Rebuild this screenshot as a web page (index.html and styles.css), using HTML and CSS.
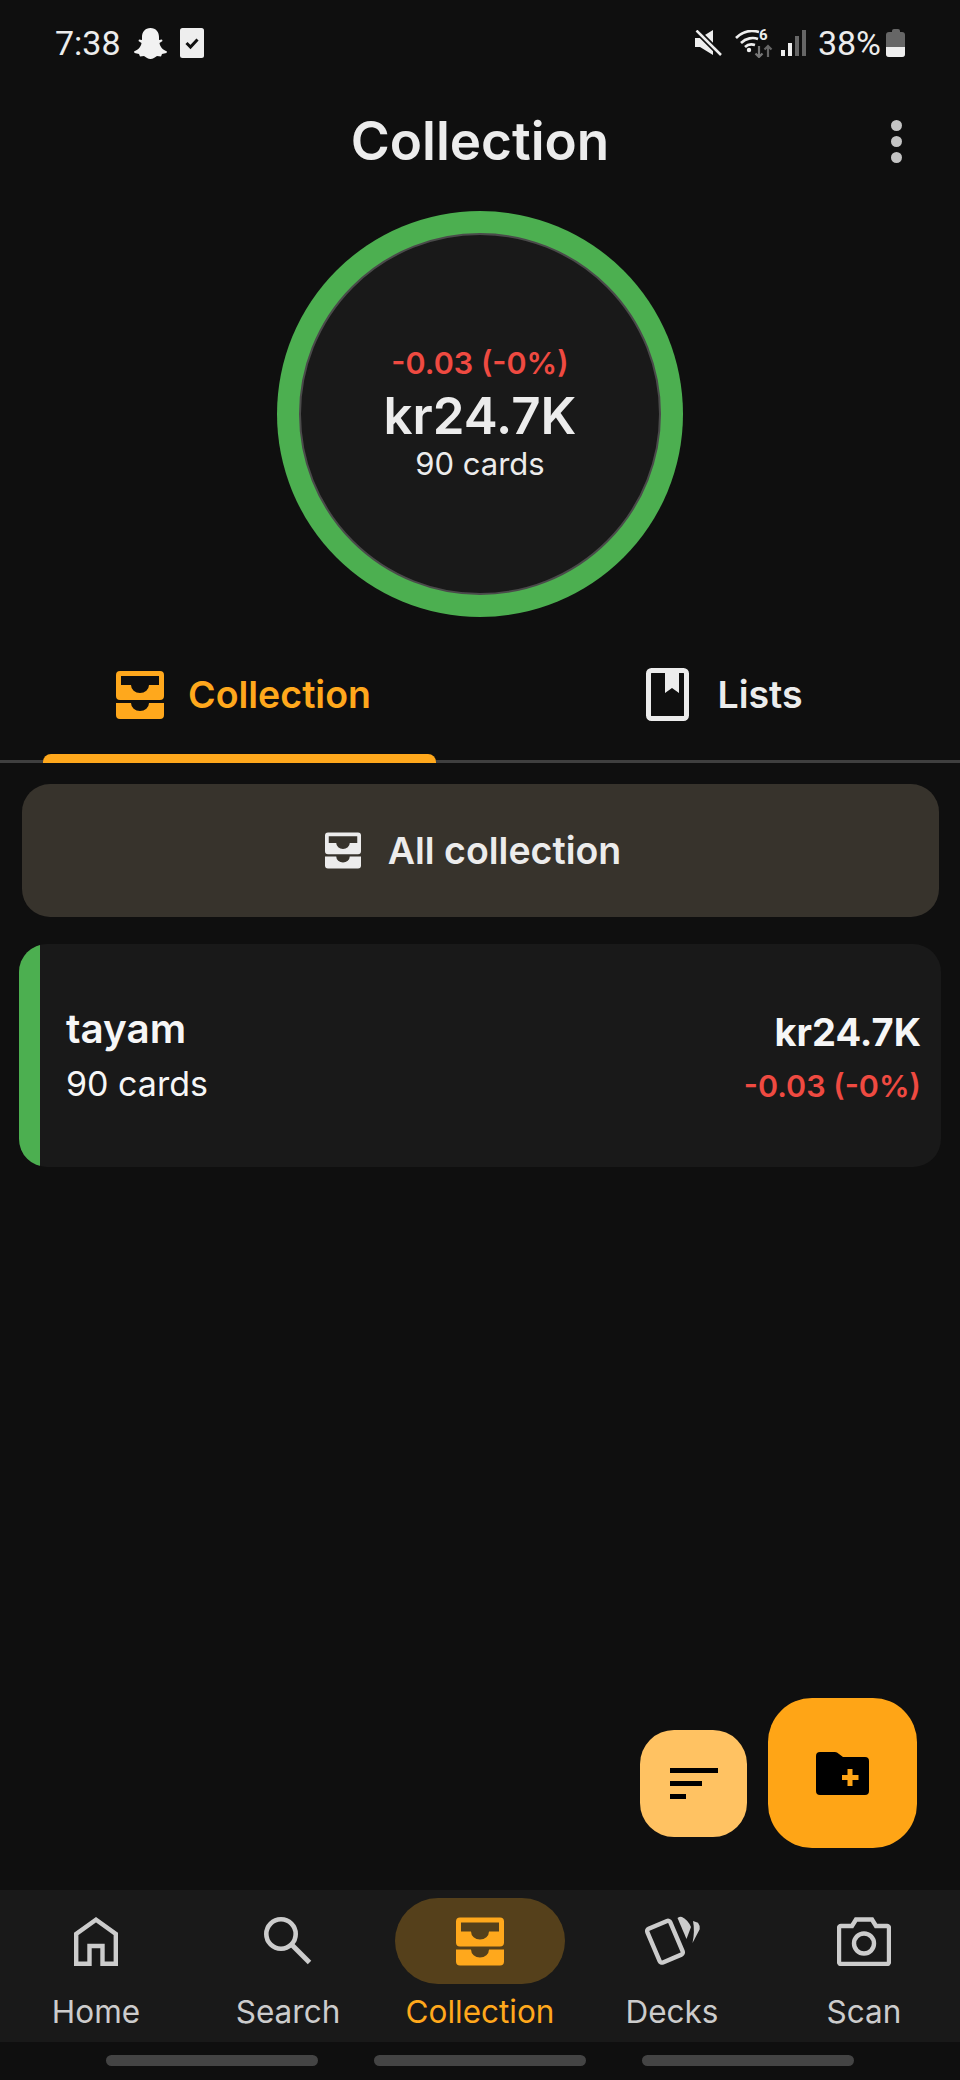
FILE: index.html
```html
<!DOCTYPE html>
<html lang="en">
<head>
    <meta charset="UTF-8">
    <meta name="viewport" content="width=device-width, initial-scale=1.0">
    <title>Collection</title>
    <link rel="stylesheet" href="styles.css">
</head>
<body>

    <!-- Shared icons -->
    <svg class="icon-defs" width="0" height="0" aria-hidden="true">
        <symbol id="icon-trays" viewBox="0 0 48 48">
            <path fill-rule="evenodd" d="M4 0H44a4 4 0 0 1 4 4V25a4 4 0 0 1-4 4H4a4 4 0 0 1-4-4V4a4 4 0 0 1 4-4ZM5 5V14H15a9 8 0 0 0 18 0H43V5Z"/>
            <path d="M0 32H15a9 8 0 0 0 18 0H48V44a4 4 0 0 1-4 4H4a4 4 0 0 1-4-4Z"/>
        </symbol>
    </svg>

    <!-- Status bar -->
    <div class="status-bar">
        <div class="status-left">
            <span class="status-text">7:38</span>
            <svg class="icon-ghost" width="33" height="31" viewBox="0 0 33 31">
                <path d="M16.5 0C22 0 25 4 25 9V12L28 11.5 28.5 13 25.5 15C26 19 29 22 33 23.5L32.5 25 28 26 27 28.5 23 28C21 29 19 31 16.5 31 14 31 12 29 10 28L6 28.5 5 26 .5 25 0 23.5C4 22 7 19 7.5 15L4.5 13 5 11.5 8 12V9C8 4 11 0 16.5 0Z"/>
            </svg>
            <svg class="icon-check" width="24" height="30" viewBox="0 0 24 30">
                <rect width="24" height="30" rx="2.5" fill="#eeeeee"/>
                <path d="M6.5 15L10.5 19 17.5 11.5" fill="none" stroke="#111111" stroke-width="3"/>
            </svg>
        </div>
        <div class="status-right">
            <svg class="icon-mute" width="27" height="26" viewBox="0 0 27 26">
                <path d="M0 8H5L18 0V25L5 17H0Z" fill="#eeeeee"/>
                <path d="M1 0L26 25" stroke="#0f0f0f" stroke-width="6"/>
                <path d="M1.500 0.500L26 25" stroke="#eeeeee" stroke-width="2.500"/>
            </svg>
            <div class="wifi">
                <svg width="38" height="28" viewBox="0 0 38 28">
                    <path d="M1 8C8 1 17 0 24 2M6 13C11 8 18 7 23 9M10 17C13 14 17 14 20 15" fill="none" stroke="#eeeeee" stroke-width="2.600"/>
                    <circle cx="14" cy="20" r="2.200" fill="#eeeeee"/>
                    <path d="M24 16V27M20.500 23.500L24 27 27.500 23.500" fill="none" stroke="#777777" stroke-width="2.200"/>
                    <path d="M33 27V16M29.500 19.500L33 16 36.500 19.500" fill="none" stroke="#666666" stroke-width="2.200"/>
                </svg>
                <span class="wifi-six">6</span>
            </div>
            <div class="signal">
                <span class="signal-bar bar-one"></span>
                <span class="signal-bar bar-two"></span>
                <span class="signal-bar bar-three off"></span>
                <span class="signal-bar bar-four off"></span>
            </div>
            <span class="status-text">38%</span>
            <div class="battery">
                <span class="battery-cap"></span>
                <span class="battery-body"><span class="battery-level"></span></span>
            </div>
        </div>
    </div>

    <!-- Title -->
    <header class="top-bar">
        <h1>Collection</h1>
        <div class="more-dots"><span></span><span></span><span></span></div>
    </header>

    <!-- Value ring -->
    <section class="ring-area">
        <div class="ring">
            <div class="ring-inner">
                <div class="change ring-change">-0.03 (-0%)</div>
                <div class="ring-value">kr24.7K</div>
                <div class="ring-count">90 cards</div>
            </div>
        </div>
    </section>

    <!-- Tabs -->
    <nav class="tabs">
        <div class="tab active">
            <svg class="tab-icon" width="48" height="48"><use href="#icon-trays"/></svg>
            <span>Collection</span>
        </div>
        <div class="tab tab-lists">
            <svg class="tab-icon" width="43" height="53" viewBox="0 0 43 53">
                <rect x="2.500" y="2.500" width="38" height="48" rx="3" fill="none" stroke="currentColor" stroke-width="5"/>
                <path d="M19 3H33V25L26 20 19 25Z"/>
            </svg>
            <span>Lists</span>
        </div>
    </nav>

    <main class="content">
        <div class="all-button">
            <svg width="36" height="37"><use href="#icon-trays"/></svg>
            <span>All collection</span>
        </div>

        <div class="list-card">
            <span class="card-stripe"></span>
            <div class="card-body">
                <div class="card-left">
                    <div class="card-name">tayam</div>
                    <div class="card-count">90 cards</div>
                </div>
                <div class="card-right">
                    <div class="card-value">kr24.7K</div>
                    <div class="change">-0.03 (-0%)</div>
                </div>
            </div>
        </div>

        <!-- Floating buttons -->
        <div class="fab-group">
            <div class="fab fab-small">
                <span class="sort-line line-long"></span>
                <span class="sort-line line-mid"></span>
                <span class="sort-line line-short"></span>
            </div>
            <div class="fab fab-big">
                <svg width="53" height="43" viewBox="0 0 53 43">
                    <path d="M4 0H19Q21 0 23 2L27 5H49a4 4 0 0 1 4 4V39a4 4 0 0 1-4 4H4a4 4 0 0 1-4-4V4a4 4 0 0 1 4-4Z" fill="#000000"/>
                    <path d="M31.500 17H36.500V23H42.500V28H36.500V34H31.500V28H26V23H31.500Z" fill="#ffa516"/>
                </svg>
            </div>
        </div>
    </main>

    <!-- Bottom navigation -->
    <nav class="bottom-nav">
        <div class="nav-item">
            <div class="nav-icon">
                <svg width="44" height="49" viewBox="0 0 44 49">
                    <path d="M2.200 46.800V17L22 2.800 41.800 17V46.800H28.500V29H15.500V46.800Z" fill="none" stroke="currentColor" stroke-width="4.400"/>
                </svg>
            </div>
            <span>Home</span>
        </div>
        <div class="nav-item">
            <div class="nav-icon">
                <svg width="48" height="48" viewBox="0 0 48 48">
                    <circle cx="17" cy="17" r="14.700" fill="none" stroke="currentColor" stroke-width="4.600"/>
                    <path d="M27.500 27.500L45.500 45.500" stroke="currentColor" stroke-width="5"/>
                </svg>
            </div>
            <span>Search</span>
        </div>
        <div class="nav-item selected">
            <div class="nav-icon">
                <svg width="48" height="49"><use href="#icon-trays"/></svg>
            </div>
            <span>Collection</span>
        </div>
        <div class="nav-item">
            <div class="nav-icon">
                <svg width="58" height="51" viewBox="0 0 58 51">
                    <rect x="9.500" y="7.400" width="25" height="36.600" rx="2.500" transform="rotate(-23 22 25.700)" fill="none" stroke="currentColor" stroke-width="4.400"/>
                    <path d="M34.500 2Q37 0 39 1 45 4 48 11L43.500 23Z" fill="currentColor"/>
                    <path d="M50 5L55 6.700Q57 9 56.700 13.300L49.500 27Q52 15 50 5Z" fill="currentColor"/>
                </svg>
            </div>
            <span>Decks</span>
        </div>
        <div class="nav-item">
            <div class="nav-icon">
                <svg width="54" height="49" viewBox="0 0 54 49">
                    <path d="M4 9H15L19 2.500H35L39 9H50a2 2 0 0 1 2 2V45a2 2 0 0 1-2 2H4a2 2 0 0 1-2-2V11a2 2 0 0 1 2-2Z" fill="none" stroke="currentColor" stroke-width="4.400"/>
                    <circle cx="27" cy="26.500" r="10" fill="none" stroke="currentColor" stroke-width="4.400"/>
                </svg>
            </div>
            <span>Scan</span>
        </div>
    </nav>

    <!-- Gesture hints -->
    <div class="gesture-bar">
        <span></span>
        <span></span>
        <span></span>
    </div>

</body>
</html>
```

FILE: styles.css
```css
/* Base */
html, body {
    margin: 0;
    padding: 0;
}

body {
    width: 960px;
    height: 2080px;
    display: flex;
    flex-direction: column;
    overflow: hidden;
    color: #ececec;
    background: #0f0f0f;
    font-family: 'Inter', 'Liberation Sans', sans-serif;
}

.icon-defs {
    position: absolute;
}

/* Status bar */
.status-bar {
    height: 86px;
    flex: none;
    display: flex;
    justify-content: space-between;
    align-items: center;
    padding: 0 55px 0 55px;
    box-sizing: border-box;
    font-family: 'Roboto', sans-serif;
}

.status-left,
.status-right {
    display: flex;
    align-items: center;
}

.status-text {
    font-size: 34px;
    line-height: 40px;
}

.icon-ghost {
    margin-left: 13px;
    fill: #f2f2f2;
}

.icon-check {
    margin-left: 13px;
}

.wifi {
    position: relative;
    width: 38px;
    height: 28px;
    margin-left: 13px;
    margin-top: 2px;
}

.wifi-six {
    position: absolute;
    top: -4px;
    left: 24px;
    font-size: 15px;
    line-height: 18px;
    font-weight: 700;
}

.signal {
    display: flex;
    align-items: flex-end;
    gap: 3px;
    height: 26px;
    margin-left: 8px;
    margin-right: 12px;
}

.signal-bar {
    width: 4px;
    background: #eeeeee;
}

.signal-bar.off {
    background: #666666;
}

.bar-one { height: 6px; }
.bar-two { height: 13px; }
.bar-three { height: 20px; }
.bar-four { height: 26px; }

.battery {
    width: 19px;
    margin-left: 5px;
    display: flex;
    flex-direction: column;
    align-items: center;
}

.battery-cap {
    width: 8px;
    height: 3px;
    background: #666666;
    border-radius: 2px 2px 0 0;
}

.battery-body {
    width: 19px;
    height: 25px;
    display: flex;
    align-items: flex-end;
    background: #666666;
    border-radius: 3px;
    overflow: hidden;
}

.battery-level {
    width: 100%;
    height: 10px;
    background: #eeeeee;
}

/* Title */
.top-bar {
    height: 104px;
    flex: none;
    display: grid;
    grid-template-columns: 1fr auto 1fr;
    align-items: center;
    box-sizing: border-box;
    padding: 6px 58px 0 0;
}

.top-bar h1 {
    grid-column: 2;
    margin: 0 0 0 58px;
    font-size: 53px;
    font-weight: 600;
    line-height: 60px;
}

.more-dots {
    grid-column: 3;
    justify-self: end;
    display: flex;
    flex-direction: column;
    gap: 5px;
}

.more-dots span {
    width: 11px;
    height: 11px;
    border-radius: 50%;
    background: #c4c4c4;
}

/* Value ring */
.ring-area {
    flex: none;
    display: flex;
    justify-content: center;
    padding-top: 21px;
}

.ring {
    width: 406px;
    height: 406px;
    padding: 22px;
    box-sizing: border-box;
    border-radius: 50%;
    background: #4caf50;
}

.ring-inner {
    width: 100%;
    height: 100%;
    box-sizing: border-box;
    border: 2px solid #4a4a4a;
    border-radius: 50%;
    background: #191919;
    display: flex;
    flex-direction: column;
    justify-content: center;
    align-items: center;
}

.change {
    color: #ef4a41;
    font-size: 30.5px;
    font-weight: 600;
    line-height: 36px;
}

.ring-change {
    margin-bottom: 7px;
}

.ring-value {
    font-size: 51px;
    font-weight: 600;
    line-height: 56px;
}

.ring-count {
    margin-top: 1px;
    font-size: 31px;
    line-height: 38px;
}

/* Tabs */
.tabs {
    flex: none;
    height: 146px;
    display: flex;
    box-sizing: border-box;
    border-bottom: 3px solid #3f3f3f;
}

.tab {
    position: relative;
    flex: 1;
    display: flex;
    justify-content: center;
    align-items: center;
    gap: 24px;
    padding: 12px 0 0 8px;
    font-size: 37.5px;
    font-weight: 600;
    color: #ececec;
    fill: currentColor;
}

.tab-lists {
    gap: 28px;
    padding-left: 10px;
}

.tab.active {
    color: #ffa81c;
}

.tab.active::after {
    content: "";
    position: absolute;
    left: 43px;
    right: 43px;
    bottom: -3px;
    height: 9px;
    background: #ffa81c;
    border-radius: 8px 8px 0 0;
}

/* Content */
.content {
    position: relative;
    flex: 1;
    display: flex;
    flex-direction: column;
    align-items: center;
    gap: 27px;
    padding-top: 21px;
}

.all-button {
    width: 917px;
    height: 133px;
    box-sizing: border-box;
    padding-right: 14px;
    display: flex;
    justify-content: center;
    align-items: center;
    gap: 27px;
    border-radius: 28px;
    background: #37332c;
    font-size: 37.5px;
    font-weight: 600;
    fill: #ececec;
}

.list-card {
    width: 922px;
    height: 223px;
    display: flex;
    border-radius: 28px;
    background: #191919;
    overflow: hidden;
}

.card-stripe {
    width: 21px;
    flex: none;
    background: #4caf50;
}

.card-body {
    flex: 1;
    display: flex;
    justify-content: space-between;
    align-items: center;
    padding: 0 20px 0 26px;
}

.card-name {
    margin-bottom: 9px;
    font-size: 40.5px;
    font-weight: 600;
    line-height: 48px;
    color: #f6f6f6;
}

.card-count {
    font-size: 34px;
    line-height: 44px;
    color: #f6f6f6;
}

.card-right {
    text-align: right;
}

.card-value {
    margin-bottom: 12px;
    font-size: 38px;
    font-weight: 700;
    line-height: 48px;
    color: #f6f6f6;
}

/* Floating buttons */
.fab-group {
    position: absolute;
    right: 43px;
    bottom: 42px;
    display: flex;
    align-items: flex-end;
    gap: 21px;
}

.fab {
    display: flex;
    justify-content: center;
    align-items: center;
}

.fab-small {
    width: 107px;
    height: 107px;
    margin-bottom: 11px;
    flex-direction: column;
    gap: 8px;
    border-radius: 34px;
    background: #ffc262;
}

.sort-line {
    height: 5px;
    background: #000000;
}

.line-long { width: 48px; }
.line-mid { width: 32px; margin-right: 16px; }
.line-short { width: 16px; margin-right: 32px; }

.fab-big {
    width: 149px;
    height: 150px;
    border-radius: 44px;
    background: #ffa516;
}

/* Bottom navigation */
.bottom-nav {
    flex: none;
    height: 152px;
    display: flex;
    background: #191919;
}

.nav-item {
    flex: 1;
    display: flex;
    flex-direction: column;
    align-items: center;
    color: #cccccc;
    font-size: 31.5px;
    line-height: 36px;
}

.nav-icon {
    width: 170px;
    height: 86px;
    margin-top: 8px;
    margin-bottom: 10px;
    display: flex;
    justify-content: center;
    align-items: center;
    border-radius: 43px;
}

.nav-item.selected {
    color: #ffa81c;
    fill: #ffa81c;
}

.nav-item.selected .nav-icon {
    background: #55401b;
}

/* Gesture hints */
.gesture-bar {
    flex: none;
    height: 38px;
    display: flex;
    justify-content: center;
    gap: 56px;
    padding-top: 13px;
    box-sizing: border-box;
}

.gesture-bar span {
    width: 212px;
    height: 11px;
    border-radius: 6px;
    background: #444444;
}
```
